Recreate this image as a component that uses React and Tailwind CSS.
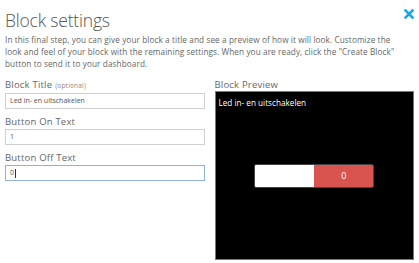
import React from 'react';

const Field = ({ label, hint, value, focused }) => (
  <div className="flex flex-col">
    <label className="text-[9.5px] leading-[12px] text-[#666] tracking-[0.2px]">
      {label}
      {hint && <span className="text-[6.5px] text-[#888] ml-[3px]">{hint}</span>}
    </label>
    <div
      className={`mt-[1px] h-[16px] flex items-center px-[4px] text-[7px] text-[#555] bg-white border ${
        focused ? 'border-[#8fb1e6]' : 'border-[#cfcfcf]'
      }`}
    >
      {value}
      {focused && <span className="w-px h-[9px] bg-[#333] ml-[1px]" />}
    </div>
  </div>
);

const App = () => {
  return (
    <div
      className="relative w-[419px] h-[263px] overflow-hidden bg-white px-[5px]"
      style={{ fontFamily: '"Open Sans", "Liberation Sans", sans-serif' }}
    >
      <h2 className="pt-[9px] text-[17.5px] leading-[22px] font-light text-[#555] tracking-[-0.2px]">Block settings</h2>
      <button className="absolute top-[9px] right-[5px] w-[10px] h-[10px]">
        <svg viewBox="0 0 10 10" width="10" height="10">
          <path d="M1.5 1.5 L8.5 8.5 M8.5 1.5 L1.5 8.5" stroke="#1ea5e6" strokeWidth="2.6" strokeLinecap="square" />
        </svg>
      </button>
      <p className="mt-[3px] text-[8.2px] leading-[12px] text-[#666] tracking-[0.1px] whitespace-nowrap">
        In this final step, you can give your block a title and see a preview of how it will look. Customize the
        <br />
        look and feel of your block with the remaining settings. When you are ready, click the "Create Block"
        <br />
        button to send it to your dashboard.
      </p>

      <div className="mt-[9px] flex gap-[10px]">
        <div className="w-[200px] flex flex-col gap-[7px]">
          <Field label="Block Title" hint="(optional)" value="Led in- en uitschakelen" />
          <Field label="Button On Text" value="1" />
          <Field label="Button Off Text" value="0" focused />
        </div>

        <div className="w-[200px] flex flex-col">
          <span className="text-[9.5px] leading-[12px] text-[#666] tracking-[0.2px]">Block Preview</span>
          <div className="h-[169px] bg-black border border-[#777] flex flex-col px-[3px] pt-[5px]">
            <span className="text-[8.2px] leading-[11px] text-white">Led in- en uitschakelen</span>
            <div className="flex-1 flex items-center justify-center pb-[16px]">
              <div className="flex w-[120px] h-[24px] rounded-[2px] overflow-hidden border border-[#444]">
                <div className="flex-1 bg-white" />
                <div className="flex-1 bg-[#d9534f] flex items-center justify-center text-white text-[9px]">0</div>
              </div>
            </div>
          </div>
        </div>
      </div>
    </div>
  );
};

export default App;
